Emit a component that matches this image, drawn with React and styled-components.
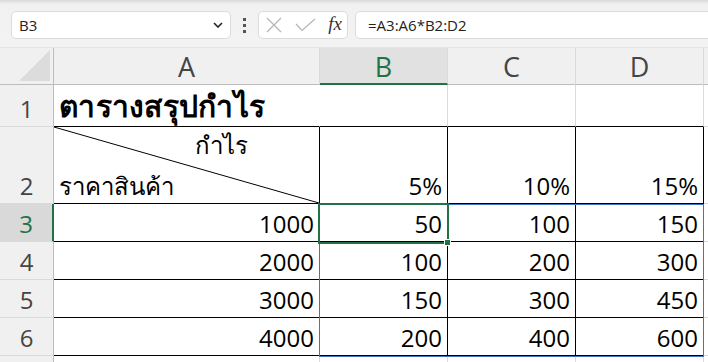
import React from 'react';
import styled, { createGlobalStyle } from 'styled-components';

const GREEN = '#217346';
const BLUE = '#4472c4';
const GRID = '#dadada';
const HEAD_LINE = '#bdbdbd';

const columns = ['A', 'B', 'C', 'D'];
const prices = [1000, 2000, 3000, 4000];
const rates = [5, 10, 15];

export default function App() {
  return (
    <>
      <GlobalStyle />
      <Page>
        <Toolbar>
          <NameBox>
            <span>B3</span>
            <svg width="10" height="6" viewBox="0 0 10 6">
              <path d="M1 1 L5 5 L9 1" fill="none" stroke="#222" strokeWidth="1.6" />
            </svg>
          </NameBox>
          <Dots>
            <i /><i /><i />
          </Dots>
          <FuncBox>
            <svg width="16" height="16" viewBox="0 0 16 16">
              <path d="M1 1 L15 15 M15 1 L1 15" stroke="#b4b4b4" strokeWidth="1.2" fill="none" />
            </svg>
            <svg width="21" height="14" viewBox="0 0 21 14">
              <path d="M1 6 L7 12.5 L20 1" stroke="#b4b4b4" strokeWidth="1.2" fill="none" />
            </svg>
            <Fx>fx</Fx>
          </FuncBox>
          <FormulaBox>=A3:A6*B2:D2</FormulaBox>
        </Toolbar>

        <Sheet>
          <Corner>
            <svg width="31" height="31" viewBox="0 0 31 31">
              <path d="M31 0 L31 31 L0 31 Z" fill="#dcdcdc" />
            </svg>
          </Corner>
          {columns.map((c) => (
            <ColHead key={c} $active={c === 'B'}>{c}</ColHead>
          ))}
          <ColHead $last />

          <RowHead>1</RowHead>
          <Cell $bottom="#000" $right="transparent">
            <Title>ตารางสรุปกำไร</Title>
          </Cell>
          <Cell $bottom="#000" />
          <Cell $bottom="#000" />
          <Cell $bottom="#000" />
          <Cell />

          <RowHead>2</RowHead>
          <DiagCell $bottom="#000" $right="#000">
            <svg width="100%" height="100%" viewBox="0 0 100 100" preserveAspectRatio="none">
              <path d="M0 0 L100 100" stroke="#000" strokeWidth="1" vectorEffect="non-scaling-stroke" />
            </svg>
            <DiagTop>กำไร</DiagTop>
            <DiagBottom>ราคาสินค้า</DiagBottom>
          </DiagCell>
          {rates.map((r) => (
            <Cell key={r} $bottom="#000" $right="#000">{r}%</Cell>
          ))}
          <Cell />

          {prices.map((p, i) => (
            <React.Fragment key={p}>
              <RowHead $active={i === 0}>{i + 3}</RowHead>
              <Cell $bottom="#000" $right="#000">{p}</Cell>
              {rates.map((r) => (
                <Cell key={r} $bottom="#000" $right="#000">{(p * r) / 100}</Cell>
              ))}
              <Cell />
            </React.Fragment>
          ))}

          <RowHead />
          <Cell />
          <Cell />
          <Cell />
          <Cell />
          <Cell />

          <SpillRange />
          <Selection>
            <FillHandle />
          </Selection>
        </Sheet>
      </Page>
    </>
  );
}

const GlobalStyle = createGlobalStyle`
  html, body { margin: 0; padding: 0; background: #fff; }
  body { font-family: "Open Sans", "Noto Sans", "Liberation Sans", sans-serif; }
`;

const Page = styled.div`
  width: 708px;
  height: 362px;
  overflow: hidden;
  background: #fff;
`;

const Toolbar = styled.div`
  height: 48px;
  box-sizing: border-box;
  display: flex;
  align-items: center;
  padding: 3px 0 0 11px;
  background: linear-gradient(#d9d9d9 0, #f1f1f1 4px, #f3f3f3 100%);
  border-bottom: 1px solid #e4e4e4;
`;

const Box = styled.div`
  height: 28px;
  box-sizing: border-box;
  background: #fff;
  border: 1px solid #dcdcdc;
  border-radius: 5px;
  display: flex;
  align-items: center;
`;

const NameBox = styled(Box)`
  width: 220px;
  padding: 0 7px 0 7px;
  justify-content: space-between;
  font-size: 15px;
  color: #222;
`;

const Dots = styled.div`
  width: 27px;
  display: flex;
  flex-direction: column;
  align-items: center;
  gap: 3px;
  i {
    width: 3px;
    height: 3px;
    background: #555;
  }
`;

const FuncBox = styled(Box)`
  width: 90px;
  padding: 0 5px 0 7px;
  justify-content: space-between;
`;

const Fx = styled.span`
  font-family: "Liberation Serif", "DejaVu Serif", serif;
  font-style: italic;
  font-size: 19px;
  color: #333;
  line-height: 1;
  margin-bottom: 3px;
`;

const FormulaBox = styled(Box)`
  margin-left: 7px;
  flex: 1;
  margin-right: -20px;
  padding-left: 12px;
  font-size: 15px;
  color: #222;
`;

const Sheet = styled.div`
  position: relative;
  display: grid;
  grid-template-columns: 54px 266px 128px 128px 128px 1fr;
  grid-template-rows: 37px 42px 77px 38px 38px 38px 38px 38px;
`;

const Corner = styled.div`
  background: #f0f0f0;
  border-right: 1px solid ${HEAD_LINE};
  border-bottom: 1px solid ${HEAD_LINE};
  display: flex;
  align-items: flex-end;
  justify-content: flex-end;
  padding: 0 3px 3px 0;
`;

const ColHead = styled.div`
  background: ${({ $active }) => ($active ? '#e1e1e1' : '#f0f0f0')};
  color: ${({ $active }) => ($active ? GREEN : '#444')};
  border-right: 1px solid ${({ $last }) => ($last ? 'transparent' : GRID)};
  border-bottom: ${({ $active }) => ($active ? `2px solid ${GREEN}` : `1px solid ${HEAD_LINE}`)};
  font-size: 27px;
  display: flex;
  align-items: center;
  justify-content: center;
  padding-top: 1px;
`;

const RowHead = styled.div`
  background: ${({ $active }) => ($active ? '#d9d9d9' : '#f0f0f0')};
  color: ${({ $active }) => ($active ? GREEN : '#444')};
  border-right: ${({ $active }) => ($active ? `2px solid ${GREEN}` : `1px solid ${HEAD_LINE}`)};
  border-bottom: 1px solid ${GRID};
  font-size: 24px;
  line-height: 1.3;
  display: flex;
  align-items: flex-end;
  justify-content: center;
  padding-bottom: 2px;
`;

const Cell = styled.div`
  border-right: 1px solid ${({ $right }) => $right || GRID};
  border-bottom: 1px solid ${({ $bottom }) => $bottom || GRID};
  font-size: 24px;
  color: #000;
  display: flex;
  align-items: flex-end;
  justify-content: flex-end;
  padding: 0 5px 2px 0;
  line-height: 1.3;
  white-space: nowrap;
`;

const Title = styled.span`
  flex: 1;
  padding-left: 5px;
  font-weight: 700;
  font-size: 30px;
  line-height: 1.2;
  letter-spacing: 0.3px;
`;

const DiagCell = styled(Cell)`
  position: relative;
  flex-direction: column;
  align-items: flex-start;
  justify-content: space-between;
  padding: 2px 0 2px 5px;
  svg {
    position: absolute;
    inset: 0;
  }
`;

const DiagTop = styled.span`
  padding-left: 136px;
  line-height: 1.3;
`;

const DiagBottom = styled.span`
  line-height: 1.3;
`;

const SpillRange = styled.div`
  position: absolute;
  left: 319px;
  top: 156px;
  width: 385px;
  height: 153px;
  box-sizing: border-box;
  border: 1px solid ${BLUE};
  pointer-events: none;
`;

const Selection = styled.div`
  position: absolute;
  left: 318px;
  top: 155px;
  width: 131px;
  height: 41px;
  box-sizing: border-box;
  border: 2px solid ${GREEN};
  pointer-events: none;
`;

const FillHandle = styled.div`
  position: absolute;
  right: -4px;
  bottom: -4px;
  width: 5px;
  height: 5px;
  background: ${GREEN};
  border: 1px solid #fff;
`;
